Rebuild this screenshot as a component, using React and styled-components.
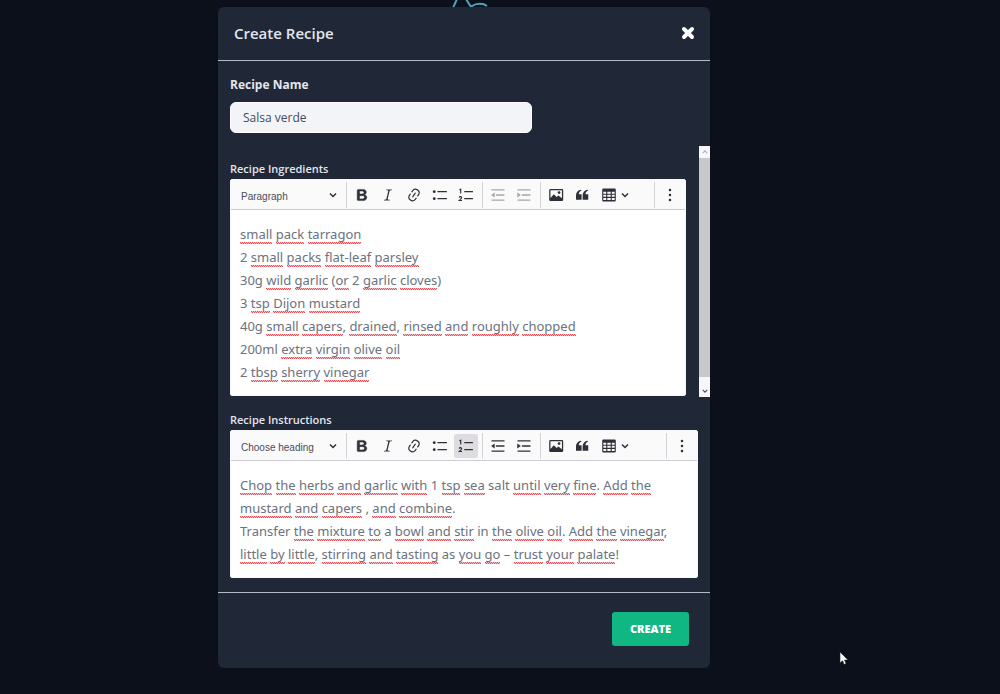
import React from "react";
import styled, { createGlobalStyle, css } from "styled-components";

const GlobalStyle = createGlobalStyle`
  *, *::before, *::after { box-sizing: border-box; }
  body {
    margin: 0;
    min-height: 100vh;
    background: #0b101b;
    font-family: "Open Sans", "Noto Sans", sans-serif;
    color: #e2e6ee;
  }
  button, input, select { font: inherit; color: inherit; }
`;

const Page = styled.div`
  display: grid;
  grid-template-columns: 218fr 492fr 290fr;
`;

const Backdrop = styled.header`
  grid-column: 2;
  height: 7px;
  display: flex;
  justify-content: center;
`;

const Modal = styled.form`
  grid-column: 2;
  background: #202737;
  border-radius: 6px;
  overflow: hidden;
`;

const ModalHeader = styled.header`
  display: flex;
  align-items: center;
  justify-content: space-between;
  height: 54px;
  padding: 0 15px 2px 16px;
  border-bottom: 1px solid #b4bac6;
`;

const Title = styled.h1`
  margin: 0;
  font-size: 15px;
  line-height: 24px;
  font-weight: 600;
`;

const CloseButton = styled.button`
  display: flex;
  padding: 0;
  border: 0;
  background: none;
  color: #fff;
  cursor: pointer;
`;

const NameField = styled.div`
  display: flex;
  flex-direction: column;
  padding: 14px 12px 13px;
`;

const Label = styled.label`
  display: block;
  font-size: ${(p) => (p.$small ? 11 : 12)}px;
  line-height: 20px;
  font-weight: ${(p) => (p.$small ? 600 : 700)};
`;

const NameInput = styled.input`
  width: 302px;
  max-width: 100%;
  height: 31px;
  margin-top: 7px;
  padding: 0 12px;
  border: 1px solid #fdfdff;
  border-radius: 6px;
  background: #f3f4f8;
  color: #454b57;
  font-size: 12px;
  outline: none;
`;

const ScrollArea = styled.div`
  display: flex;
  height: 251px;
`;

const ScrollContent = styled.div`
  flex: 1;
  min-width: 0;
  padding: 13px 13px 1px 12px;
`;

const ScrollBar = styled.div`
  display: flex;
  flex-direction: column;
  width: 11px;
  background: #f1f2f4;
`;

const ScrollButton = styled.button`
  display: flex;
  align-items: center;
  justify-content: center;
  height: ${(p) => (p.$end ? 20 : 12)}px;
  padding: ${(p) => (p.$end ? "8px 0 0" : "0")};
  border: 0;
  background: #f6f7f9;
  color: ${(p) => (p.$end ? "#4b4d52" : "#b0b2b6")};
`;

const ScrollThumb = styled.div`
  flex: 1;
  background: #c6c8ca;
`;

const Section = styled.section`
  padding: 13px 12px 14px;
`;

const Editor = styled.div`
  border: 1px solid #f6f7f9;
  border-radius: 2px;
  background: #fff;
  color: #6b7280;
`;

const Toolbar = styled.div`
  display: flex;
  align-items: center;
  height: 30px;
  border-bottom: 1px solid #ccced3;
  background: #fafafb;
  color: #2e3038;
`;

const HeadingPicker = styled.div`
  position: relative;
  width: 115px;
  height: 24px;
`;

const HeadingSelect = styled.select`
  width: 100%;
  height: 100%;
  padding: 0 24px 0 10px;
  border: 0;
  background: none;
  appearance: none;
  font-family: "Liberation Sans", Arial, sans-serif;
  font-size: 10px;
  color: #4a4c53;
`;

const PickerArrow = styled.span`
  position: absolute;
  top: 8px;
  right: 9px;
  display: flex;
  pointer-events: none;
`;

const Group = styled.div`
  display: flex;
  align-items: center;
  gap: 2px;
  height: 26px;
  padding: 0 4px 0 3px;
  border-left: 1px solid #d3d4d8;
`;

const MoreGroup = styled(Group)`
  margin-left: auto;
  padding: 0 3px;
`;

const ToolButton = styled.button`
  display: flex;
  align-items: center;
  justify-content: center;
  gap: 4px;
  width: ${(p) => (p.$wide ? 38 : 24)}px;
  height: 24px;
  padding: 0;
  border: 0;
  border-radius: 2px;
  background: none;
  ${(p) => p.$on && css`background: #dedce0;`}
  &:disabled { color: #a6a7ab; }
`;

const Content = styled.div`
  padding: 13px 9px 11px;
  font-family: "Noto Sans", "Open Sans", sans-serif;
  font-size: 13px;
  line-height: 23px;
  outline: none;
  p { margin: 0; }
`;

const Misspelled = styled.span`
  padding-bottom: 1px;
  background:
    repeating-linear-gradient(90deg, #e2525b 0 1px, #f6b9bd 1px 2px) left 0 bottom 1px / 100% 1px no-repeat,
    repeating-linear-gradient(90deg, #f6b9bd 0 1px, #e2525b 1px 2px) left 0 bottom 0 / 100% 1px no-repeat;
`;

const ModalFooter = styled.footer`
  display: flex;
  justify-content: flex-end;
  padding: 19px 21px 22px;
  border-top: 1px solid #b4bac6;
`;

const CreateButton = styled.button`
  width: 77px;
  height: 34px;
  padding: 0 0 2px;
  border: 0;
  border-radius: 3px;
  background: #10b783;
  color: #fff;
  font-size: 11px;
  font-weight: 800;
`;

const Pointer = styled.svg`
  position: absolute;
  left: 839px;
  top: 651px;
`;

const Icon = ({ children }) => (
  <svg width="16" height="16" viewBox="0 0 20 20" fill="currentColor" aria-hidden="true">
    {children}
  </svg>
);

const Chevron = ({ up, size = 8 }) => (
  <svg width={size} height={size} viewBox="0 0 8 8" fill="none" stroke="currentColor" strokeWidth="1.5" aria-hidden="true">
    <path d={up ? "M1 5.5 4 2.5l3 3" : "M1 2.5l3 3 3-3"} />
  </svg>
);

const BoldIcon = () => (
  <Icon>
    <path d="M10.187 17H5.773c-.637 0-1.092-.138-1.364-.415-.273-.277-.409-.718-.409-1.323V4.738c0-.617.14-1.062.419-1.332.279-.27.73-.406 1.354-.406h4.68c.69 0 1.288.041 1.793.124.506.083.96.242 1.36.478.341.197.644.447.906.75a3.262 3.262 0 0 1 .808 2.162c0 1.401-.722 2.426-2.167 3.075C15.05 10.175 16 11.315 16 13.01a3.756 3.756 0 0 1-2.296 3.504 6.1 6.1 0 0 1-1.517.377c-.571.073-1.238.11-2 .11zm-.217-6.217H7v4.087h3.069c1.977 0 2.965-.69 2.965-2.072 0-.707-.256-1.22-.768-1.537-.512-.319-1.277-.478-2.296-.478zM7 5.13v3.619h2.606c.729 0 1.292-.067 1.69-.2a1.6 1.6 0 0 0 .91-.765c.165-.267.247-.566.247-.897 0-.707-.26-1.176-.778-1.409-.519-.232-1.31-.348-2.375-.348H7z" stroke="currentColor" strokeWidth=".6" />
  </Icon>
);

const ItalicIcon = () => (
  <Icon>
    <path d="m9.586 14.633.021.004c-.036.335.095.655.393.962.082.083.173.15.274.201h1.474a.6.6 0 1 1 0 1.2H5.304a.6.6 0 0 1 0-1.2h1.15c.474-.07.809-.182 1.005-.334.157-.122.291-.32.404-.597l2.416-9.55a1.053 1.053 0 0 0-.281-.823 1.12 1.12 0 0 0-.442-.296H8.15a.6.6 0 0 1 0-1.2h6.443a.6.6 0 1 1 0 1.2h-1.195c-.376.056-.65.155-.823.296-.215.175-.423.439-.623.79l-2.366 9.347z" />
  </Icon>
);

const LinkIcon = () => (
  <Icon>
    <path d="m11.077 15 .991-1.416a.75.75 0 1 1 1.229.86l-1.148 1.64a.748.748 0 0 1-.217.206 5.251 5.251 0 0 1-8.503-5.955.741.741 0 0 1 .12-.274l1.147-1.639a.75.75 0 1 1 1.228.86L4.933 10.7l.006.003a3.75 3.75 0 0 0 6.132 4.294l.006.004zm5.494-5.335a.748.748 0 0 1-.12.274l-1.147 1.639a.75.75 0 1 1-1.228-.86l.86-1.23a3.75 3.75 0 0 0-6.144-4.301l-.86 1.229a.75.75 0 0 1-1.229-.86l1.148-1.64a.748.748 0 0 1 .217-.206 5.251 5.251 0 0 1 8.503 5.955zm-4.563-2.532a.75.75 0 0 1 .184 1.045l-3.155 4.505a.75.75 0 1 1-1.229-.86l3.155-4.506a.75.75 0 0 1 1.045-.184z" />
  </Icon>
);

const BulletsIcon = () => (
  <Icon>
    <circle cx="2.8" cy="5.8" r="1.8" />
    <circle cx="2.8" cy="14.6" r="1.8" />
    <path d="M7.5 5.8H18M7.5 14.6H18" stroke="currentColor" strokeWidth="1.7" strokeLinecap="round" />
  </Icon>
);

const NumbersIcon = () => (
  <Icon>
    <g fill="none" stroke="currentColor">
      <path d="M8.5 5.8H18M8.5 14.6H18" strokeWidth="1.7" strokeLinecap="round" />
      <path d="M1.800 3.800 3.400 2.800v5.200M1.500 13.200c.3-1.500 3-1.500 3 .2 0 1-1.500 1.800-3 3.400h3.500" strokeWidth="1.4" />
    </g>
  </Icon>
);

const DentIcon = ({ out }) => (
  <Icon>
    <path d="M2.500 3.600H17.500M8 10H17.500M2.500 16.400H17.500" stroke="currentColor" strokeWidth="1.700" strokeLinecap="round" />
    <path d={out ? "M5.800 6.900v6.200L1.400 10z" : "M1.600 6.900v6.200L6 10z"} />
  </Icon>
);

const ImageIcon = () => (
  <Icon>
    <path
      fillRule="evenodd"
      d="M3 2.500h14.500A1.500 1.500 0 0 1 19 4v12a1.500 1.500 0 0 1-1.500 1.500H3A1.500 1.500 0 0 1 1.500 16V4A1.500 1.500 0 0 1 3 2.500zM3.100 4v9.800l4.200-4.600 3.400 3.400 2.300-2 4.400 3.600V4z"
    />
    <circle cx="13.800" cy="7" r="1.700" />
  </Icon>
);

const QuoteIcon = () => (
  <Icon>
    <path d="M2.500 10.400a6.900 6.900 0 0 1 6.200-6.900l.5 1.200C7.200 5.500 6.100 7 6 9h3.500v6.800h-7zM10.800 10.400A6.900 6.900 0 0 1 17 3.500l.5 1.200c-2 .8-3.100 2.300-3.200 4.300h3.500v6.800h-7z" />
  </Icon>
);

const TableIcon = () => (
  <Icon>
    <path
      fillRule="evenodd"
      d="M3 2h14A1.500 1.500 0 0 1 18.500 3.500v13a1.500 1.500 0 0 1-1.500 1.500H3A1.500 1.500 0 0 1 1.500 16.500v-13A1.500 1.500 0 0 1 3 2zM2.900 5.800v2.600h3.600V5.800zm5 0v2.600h4.200V5.800zm5.600 0v2.600h3.600V5.800zM2.900 9.800v2.500h3.600V9.800zm5 0v2.500h4.200V9.800zm5.600 0v2.500h3.600V9.800zM2.900 13.700v2.700h3.600v-2.700zm5 0v2.700h4.200v-2.700zm5.600 0v2.700h3.600v-2.700z"
    />
  </Icon>
);

const DotsIcon = () => (
  <Icon>
    <circle cx="10" cy="3.800" r="1.600" />
    <circle cx="10" cy="10" r="1.600" />
    <circle cx="10" cy="16.200" r="1.600" />
  </Icon>
);

/* Words between underscores carry the spell checker's underline. */
const Line = ({ text }) => (
  <p>
    {text.split("_").map((part, i) => (i % 2 ? <Misspelled key={i}>{part}</Misspelled> : part))}
  </p>
);

const RichEditor = ({ id, heading, lines, numbered, canIndent }) => (
  <Editor>
    <Toolbar role="toolbar" aria-label="Editor toolbar">
      <HeadingPicker>
        <HeadingSelect aria-label="Heading" defaultValue={heading}>
          <option>{heading}</option>
        </HeadingSelect>
        <PickerArrow><Chevron /></PickerArrow>
      </HeadingPicker>
      <Group>
        <ToolButton type="button" aria-label="Bold"><BoldIcon /></ToolButton>
        <ToolButton type="button" aria-label="Italic"><ItalicIcon /></ToolButton>
        <ToolButton type="button" aria-label="Link"><LinkIcon /></ToolButton>
        <ToolButton type="button" aria-label="Bulleted list"><BulletsIcon /></ToolButton>
        <ToolButton type="button" aria-label="Numbered list" aria-pressed={!!numbered} $on={numbered}><NumbersIcon /></ToolButton>
      </Group>
      <Group>
        <ToolButton type="button" aria-label="Decrease indent" disabled={!canIndent}><DentIcon out /></ToolButton>
        <ToolButton type="button" aria-label="Increase indent" disabled={!canIndent}><DentIcon /></ToolButton>
      </Group>
      <Group>
        <ToolButton type="button" aria-label="Insert image"><ImageIcon /></ToolButton>
        <ToolButton type="button" aria-label="Block quote"><QuoteIcon /></ToolButton>
        <ToolButton type="button" aria-label="Insert table" $wide><TableIcon /><Chevron /></ToolButton>
      </Group>
      <MoreGroup>
        <ToolButton type="button" aria-label="Show more items"><DotsIcon /></ToolButton>
      </MoreGroup>
    </Toolbar>
    <Content
      role="textbox"
      aria-multiline="true"
      aria-labelledby={id}
      contentEditable
      suppressContentEditableWarning
      spellCheck={false}
    >
      {lines.map((l) => <Line key={l} text={l} />)}
    </Content>
  </Editor>
);

const ingredients = [
  "_small_ _pack_ _tarragon_",
  "2 _small_ _packs_ _flat-leaf_ _parsley_",
  "30g _wild_ _garlic_ (_or_ 2 _garlic_ _cloves_)",
  "3 _tsp_ _Dijon_ _mustard_",
  "40g _small_ _capers_, _drained_, _rinsed_ _and_ _roughly_ _chopped_",
  "200ml _extra_ _virgin_ _olive_ _oil_",
  "2 _tbsp_ _sherry_ _vinegar_",
];

const instructions = [
  "_Chop_ _the_ _herbs_ _and_ _garlic_ _with_ 1 _tsp_ _sea_ salt _until_ _very_ _fine_. _Add_ _the_ _mustard_ _and_ _capers_ , _and_ _combine_.",
  "Transfer _the_ _mixture_ _to_ a _bowl_ _and_ _stir_ in _the_ _olive_ _oil_. _Add_ _the_ _vinegar_, _little_ _by_ _little_, _stirring_ _and_ _tasting_ as _you_ _go_ – _trust_ _your_ _palate_!",
];

export default function App() {
  return (
    <>
      <GlobalStyle />
      <Page>
        <Backdrop>
          <svg width="52" height="7" viewBox="0 0 52 7" fill="none" stroke="#4fa3bd" strokeWidth="2" aria-hidden="true">
            <path d="M15 8 19-1M28-1l5 8M33 7c4-4 12-4 16-1" />
          </svg>
        </Backdrop>
        <Modal onSubmit={(e) => e.preventDefault()}>
          <ModalHeader>
            <Title>Create Recipe</Title>
            <CloseButton type="button" aria-label="Close">
              <svg width="14" height="14" viewBox="0 0 14 14" stroke="currentColor" strokeWidth="4" strokeLinecap="round" aria-hidden="true">
                <path d="M3 3l8 8M11 3l-8 8" />
              </svg>
            </CloseButton>
          </ModalHeader>
          <NameField>
            <Label htmlFor="recipe-name">Recipe Name</Label>
            <NameInput id="recipe-name" defaultValue="Salsa verde" />
          </NameField>
          <ScrollArea>
            <ScrollContent>
              <Label as="div" id="ingredients-label" $small>Recipe Ingredients</Label>
              <RichEditor id="ingredients-label" heading="Paragraph" lines={ingredients} />
            </ScrollContent>
            <ScrollBar>
              <ScrollButton type="button" aria-label="Scroll up"><Chevron up size={6} /></ScrollButton>
              <ScrollThumb />
              <ScrollButton type="button" aria-label="Scroll down" $end><Chevron size={6} /></ScrollButton>
            </ScrollBar>
          </ScrollArea>
          <Section>
            <Label as="div" id="instructions-label" $small>Recipe Instructions</Label>
            <RichEditor id="instructions-label" heading="Choose heading" lines={instructions} numbered canIndent />
          </Section>
          <ModalFooter>
            <CreateButton type="submit">CREATE</CreateButton>
          </ModalFooter>
        </Modal>
      </Page>
      <Pointer width="10" height="14" viewBox="0 0 10 14" aria-hidden="true">
        <path d="M1 1v11l2.500-2.300L5.200 13.500l1.900-.9-1.600-3.500H9z" fill="#fff" stroke="#1b1e26" strokeWidth=".6" />
      </Pointer>
    </>
  );
}
